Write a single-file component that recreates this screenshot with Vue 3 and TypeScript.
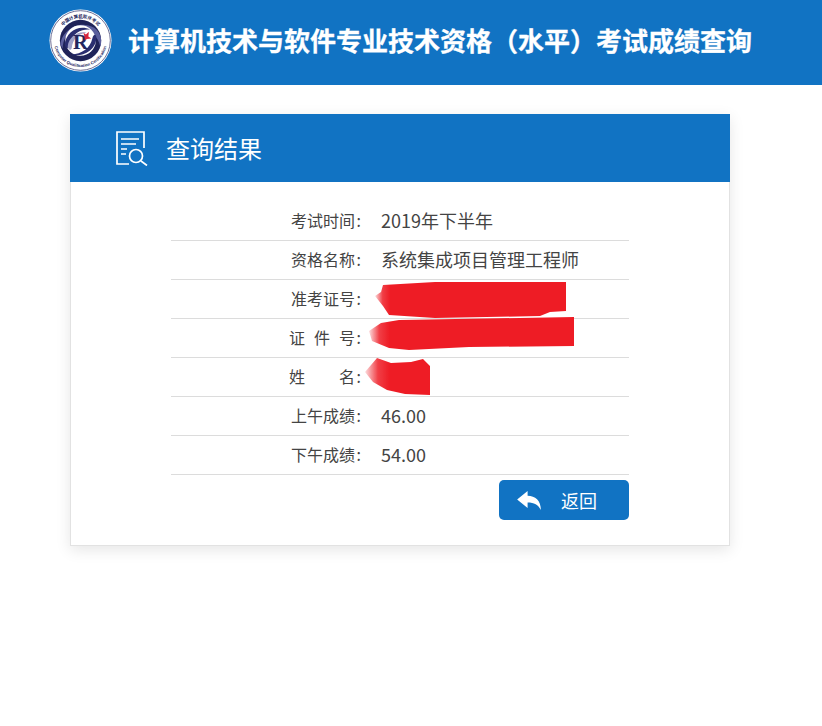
<template>
  <div class="page">
    <header class="top-bar">
      <svg class="logo" viewBox="0 0 64 64" width="63" height="63">
        <defs>
          <path id="logoTop" d="M9 32A23 23 0 0 1 55 32" />
          <path id="logoBottom" d="M5 32A27 27 0 0 0 59 32" />
        </defs>
        <circle cx="32" cy="32" r="31.500" fill="#fff" />
        <circle cx="32" cy="32" r="30.300" fill="none" stroke="#2b2f66" stroke-width="0.7" />
        <circle cx="32" cy="32" r="21" fill="#1f2358" />
        <path d="M11.500 36C13 22 30 10 46 19C54 25 54 34 52 38C50 26 38 18 27 21C18 24 14 31 14 40Z" fill="#5a5e9c" />
        <circle cx="32" cy="32" r="15.500" fill="#fff" />
        <path d="M16 36C17 24 30 15 42 21C34 20 24 24 21 35C20 41 17 41 16 36Z" fill="#2a2e70" />
        <path d="M48 28C49 40 36 50 23 46C33 46 42 40 44 30C45 26 47 25 48 28Z" fill="#2a2e70" />
        <path d="M19 38C20 28 30 22 38 24C30 25 24 30 23 40C22 42 20 42 19 38Z" fill="#9ea1c8" />
        <text x="24.500" y="41" class="logo-r">R</text>
        <path d="M35 24L37.500 26L40.500 23L40 28L43 30L38.500 30.500L36.500 32L36 28Z" fill="#d8263c" />
        <text class="logo-cn"><textPath href="#logoTop" startOffset="50%" text-anchor="middle">中国计算机软件考试</textPath></text>
        <text class="logo-en"><textPath href="#logoBottom" startOffset="50%" text-anchor="middle">Computer Qualification Certification</textPath></text>
      </svg>
      <h1 class="site-title">计算机技术与软件专业技术资格（水平）考试成绩查询</h1>
    </header>

    <main class="content">
      <section class="result-card">
        <div class="card-head">
          <svg class="head-icon" viewBox="0 0 32 35" width="32" height="35" fill="none" stroke="#fff" stroke-width="1.700">
            <path d="M13 33H1V1H28V17" />
            <path d="M5 8H23M5 13H20M5 18H11M5 23H10" />
            <circle cx="20" cy="25" r="6.500" />
            <path d="M25 30L31 34.500" />
          </svg>
          <h2 class="card-title">查询结果</h2>
        </div>

        <div class="card-body">
          <ul class="result-list">
            <li v-for="row in rows" :key="row.label" class="result-row">
              <span class="row-label">
                <span class="label-chars" :style="{ gap: row.gap ?? '0' }">
                  <span v-for="ch in row.label" :key="ch">{{ ch }}</span>
                </span>
                <span class="label-colon">:</span>
              </span>
              <span class="row-value">{{ row.value }}</span>
              <svg v-if="row.mask" class="mask" :style="row.mask.style" :viewBox="row.mask.box" preserveAspectRatio="none">
                <defs>
                  <linearGradient :id="`fade-${row.mask.fade}`" x1="0" x2="1" y1="0" y2="0">
                    <stop offset="0" stop-color="#ee1c25" stop-opacity="0.15" />
                    <stop :offset="row.mask.fade" stop-color="#ee1c25" stop-opacity="0.85" />
                    <stop :offset="row.mask.solid" stop-color="#ee1c25" />
                  </linearGradient>
                </defs>
                <path :d="row.mask.d" :fill="`url(#fade-${row.mask.fade})`" />
              </svg>
            </li>
          </ul>
          <div class="actions">
            <button class="back-btn" type="button">
              <svg viewBox="0 0 26 20" width="25" height="19">
                <path d="M0 9L11 0V5C19 5 25 10 25 20C22 14 18 12 11 12V18Z" fill="#fff" />
              </svg>
              <span>返回</span>
            </button>
          </div>
        </div>
      </section>
    </main>
  </div>
</template>

<script setup lang="ts">
interface Mask {
  style: Record<string, string>
  box: string
  d: string
  fade: number
  solid: number
}

interface Row {
  label: string
  value: string
  gap?: string
  mask?: Mask
}

// 涂抹区域，位置相对于所在行
const rows: Row[] = [
  { label: '考试时间', value: '2019年下半年' },
  { label: '资格名称', value: '系统集成项目管理工程师' },
  {
    label: '准考证号',
    value: '',
    mask: {
      style: { left: '204px', top: '2px', width: '191px', height: '36px' },
      box: '0 0 191 36',
      d: 'M8 3L60 0L191 0V29L175 30L165 34L60 36L14 33L8 24L0 14L6 10Z',
      fade: 0.04,
      solid: 0.08
    }
  },
  {
    label: '证件号',
    value: '',
    gap: '9px',
    mask: {
      style: { left: '198px', top: '-2px', width: '205px', height: '33px' },
      box: '0 0 205 33',
      d: 'M12 6L30 3L205 0V29L100 30L40 33L20 31L3 24L0 14Z',
      fade: 0.05,
      solid: 0.1
    }
  },
  {
    label: '姓名',
    value: '',
    gap: '34px',
    mask: {
      style: { left: '194px', top: '0', width: '65px', height: '37px' },
      box: '0 0 65 37',
      d: 'M12 0L26 5L46 4L58 1L65 8V37L40 36L22 32L8 24L0 14Z',
      fade: 0.2,
      solid: 0.38
    }
  },
  { label: '上午成绩', value: '46.00' },
  { label: '下午成绩', value: '54.00' }
]
</script>

<style>
html,
body {
  margin: 0;
  background: #fff;
}
</style>

<style scoped>
.page {
  height: 726px;
  overflow: hidden;
  background: #fff;
  font-family: "Noto Sans CJK SC", "Noto Sans", sans-serif;
  color: #444;
}

.top-bar {
  display: flex;
  align-items: center;
  gap: 16px;
  height: 85px;
  padding: 0 0 5px 49px;
  box-sizing: border-box;
  background: #1173c3;
}

.logo {
  flex-shrink: 0;
  margin-top: 1px;
}

.logo-r {
  font-family: "Liberation Serif", serif;
  font-size: 21px;
  font-weight: 700;
  fill: #23265e;
}

.logo-cn {
  font-size: 4.500px;
  font-weight: 700;
  fill: #23265e;
}

.logo-en {
  font-size: 4.200px;
  font-weight: 700;
  fill: #23265e;
  font-family: "Liberation Sans", sans-serif;
}

.site-title {
  margin: 0;
  font-size: 26px;
  font-weight: 700;
  line-height: 1;
  color: #fff;
  white-space: nowrap;
  -webkit-text-stroke: 0.3px #fff;
}

.content {
  padding: 29px 0 0 70px;
}

.result-card {
  width: 660px;
  height: 432px;
  box-sizing: border-box;
  background: #fff;
  border: 1px solid #e2e2e2;
  border-top: none;
  box-shadow: 0 4px 14px rgba(0, 0, 0, 0.1);
}

.card-head {
  display: flex;
  align-items: center;
  gap: 18px;
  height: 68px;
  margin: 0 -1px;
  padding-left: 46px;
  background: #1173c3;
}

.card-title {
  margin: 0;
  font-size: 24px;
  font-weight: 400;
  line-height: 1;
  color: #fff;
}

.card-body {
  padding: 20px 100px 0;
}

.result-list {
  margin: 0;
  padding: 0;
  list-style: none;
}

.result-row {
  position: relative;
  display: flex;
  align-items: center;
  height: 39px;
  padding-bottom: 2px;
  box-sizing: border-box;
  border-bottom: 1px solid #dcdcdc;
}

.row-label {
  display: flex;
  justify-content: flex-end;
  width: 190px;
  flex-shrink: 0;
  font-size: 16px;
  color: #444;
  white-space: nowrap;
}

.label-chars {
  display: flex;
}

.label-colon {
  width: 6px;
  text-align: right;
}

.row-value {
  margin-left: 20px;
  font-size: 18px;
  color: #444;
}

.mask {
  position: absolute;
  filter: blur(0.6px);
}

.actions {
  display: flex;
  justify-content: flex-end;
  margin-top: 5px;
}

.back-btn {
  display: flex;
  align-items: center;
  gap: 19px;
  width: 130px;
  height: 40px;
  padding: 0 0 0 18px;
  border: none;
  border-radius: 5px;
  background: #1173c3;
  color: #fff;
  font-family: inherit;
  font-size: 18px;
}
</style>
